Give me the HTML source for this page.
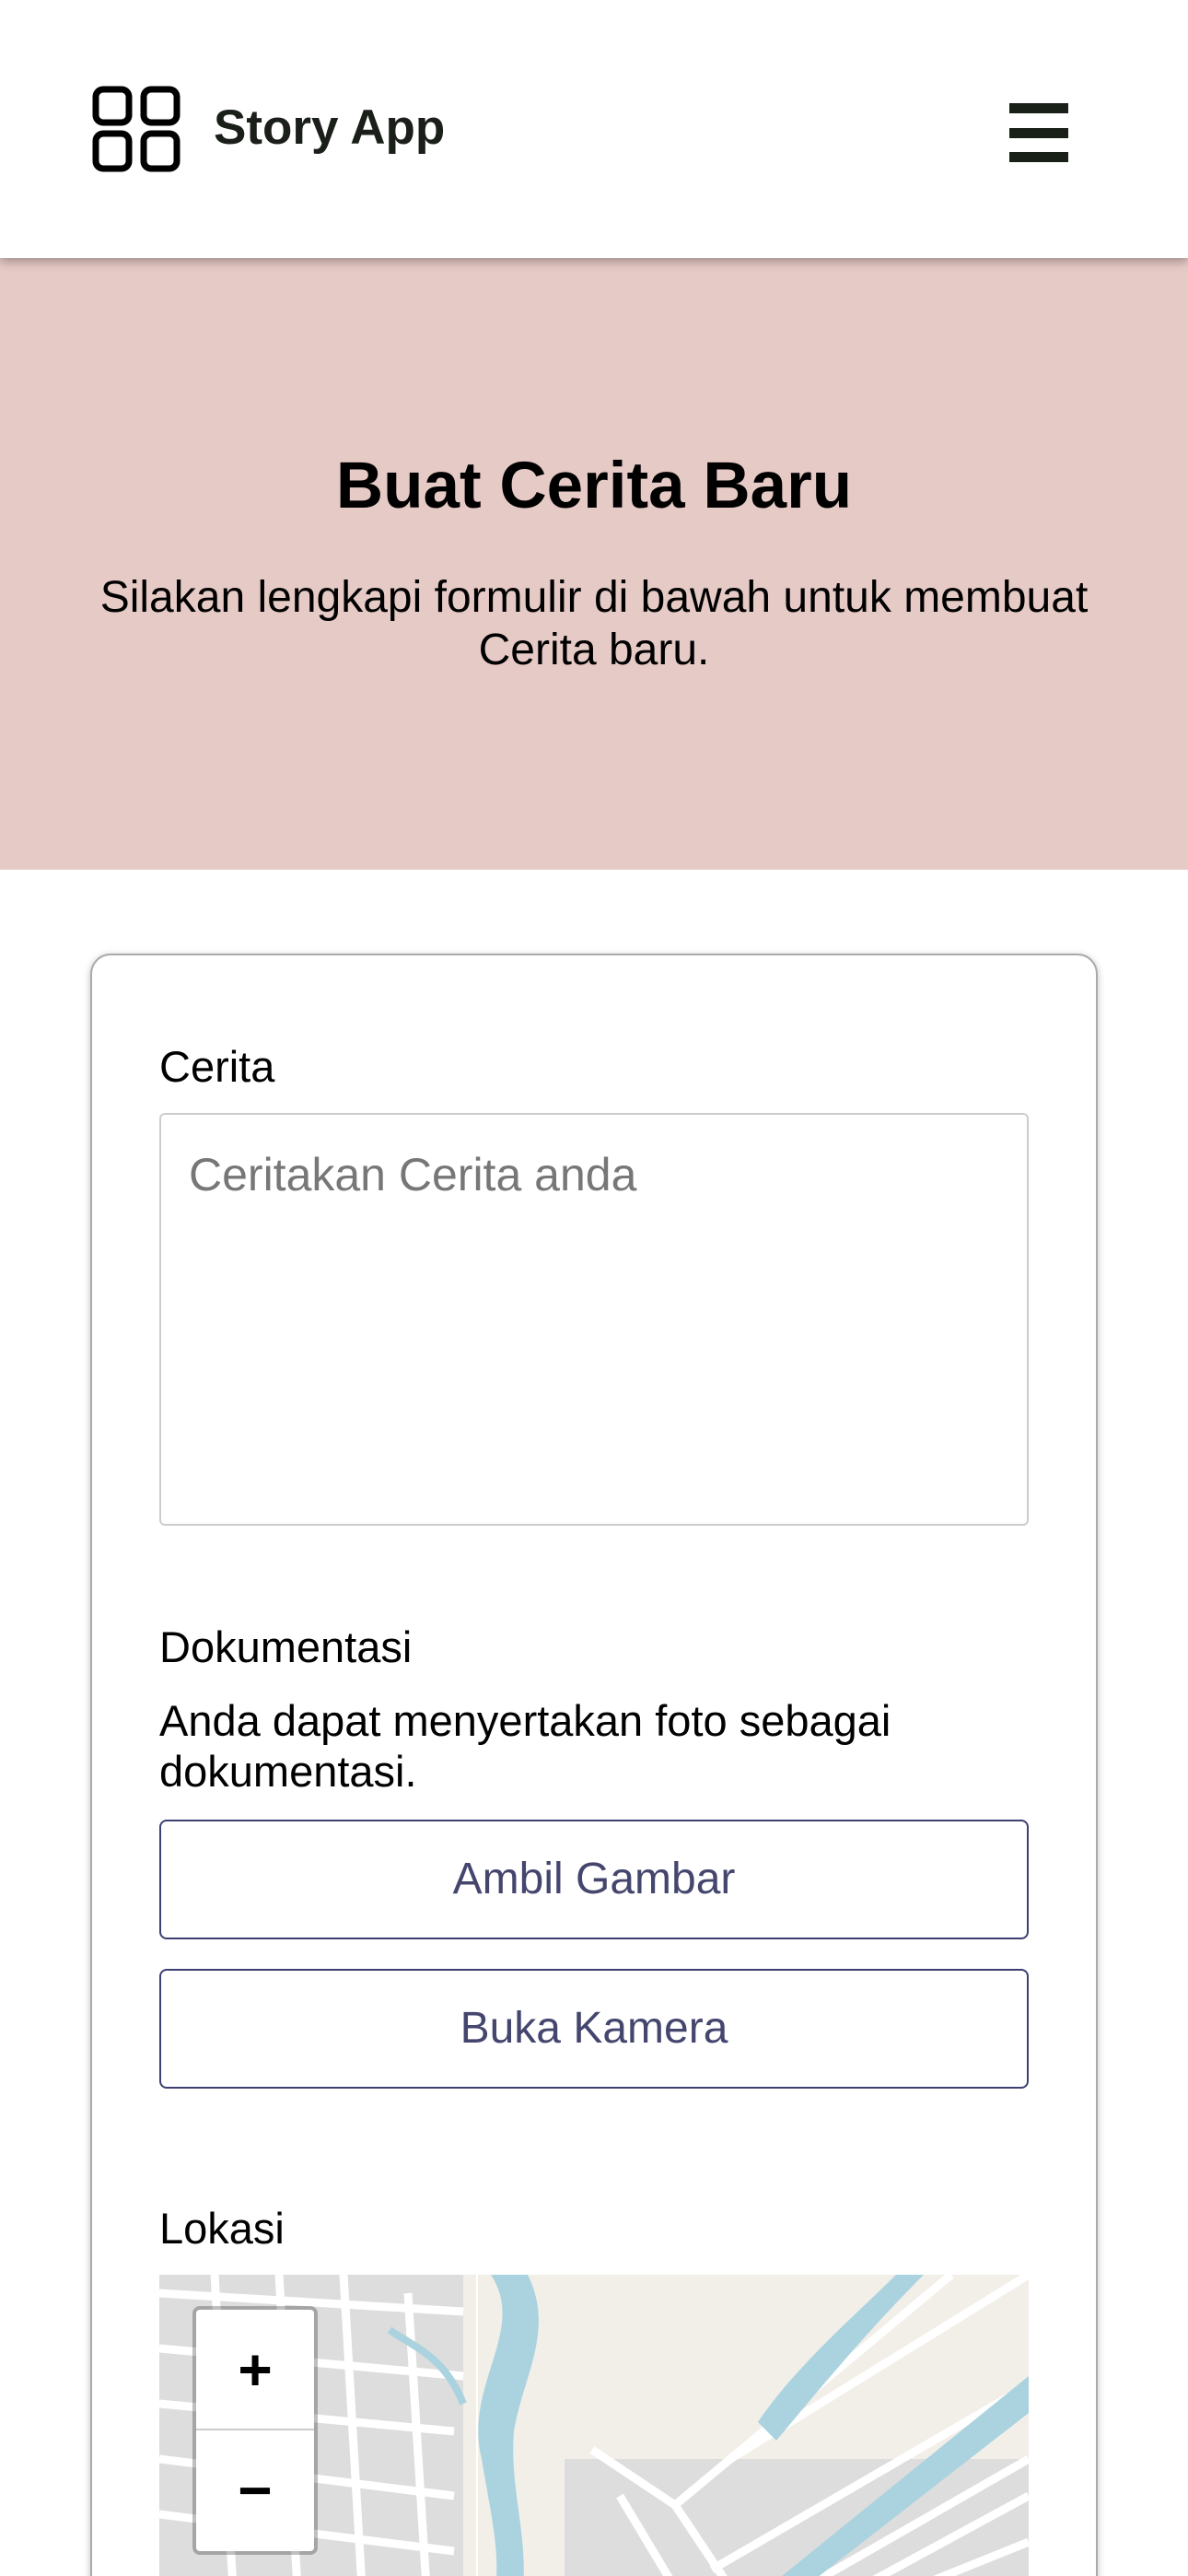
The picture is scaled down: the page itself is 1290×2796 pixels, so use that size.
<!DOCTYPE html>
<html style="height:2796px;overflow:hidden"><head><meta charset="utf-8"><style>
*{box-sizing:border-box;margin:0;padding:0}
body{width:1290px;height:2796px;overflow:hidden;background:#fff;font-family:"Liberation Sans",Arial,sans-serif;color:#000;position:relative}
.hdr{position:absolute;left:0;top:0;width:1290px;height:280px;background:#fff;box-shadow:0 4px 10px rgba(0,0,0,.3);z-index:2}
.hero{position:absolute;left:0;top:280px;width:1290px;height:664px;background:#e6cac6;text-align:center}
.hero h1{position:absolute;top:212px;width:100%;font-size:71px;font-weight:bold;line-height:1}
.hero p{position:absolute;top:340px;left:60px;right:60px;font-size:48px;line-height:57px}
.card{position:absolute;left:98px;top:1035px;width:1094px;height:1800px;border:2px solid #aaa;border-bottom:none;border-radius:22px 22px 0 0;box-shadow:0 2px 8px rgba(0,0,0,.25);background:#fff}
.lbl{position:absolute;left:173px;font-size:47px;line-height:1}
.ta{position:absolute;left:173px;top:1208px;width:944px;height:448px;border:2px solid #ccc;border-radius:6px}
.ta span{position:absolute;left:30px;top:40px;font-size:50px;color:#777;line-height:1}
.btn{position:absolute;left:173px;width:944px;height:130px;border:2px solid #3d4070;border-radius:8px;color:#44466e;font-size:48px;text-align:center;line-height:126px}
.map{position:absolute;left:173px;top:2469px;width:944px;height:327px;background:#f2efe9;overflow:hidden}
.zc{position:absolute;left:36px;top:34px;width:136px;height:270px;background:#fff;border:4px solid rgba(0,0,0,.25);border-radius:8px;background-clip:padding-box}
.zc div{height:131px;text-align:center;font-size:64px;line-height:131px;font-weight:bold}
</style></head><body>
<div class="hdr">
<svg style="position:absolute;left:100px;top:93px" width="98" height="94" viewBox="0 0 98 94"><g fill="none" stroke="#000" stroke-width="7"><rect x="4" y="4" width="36" height="36" rx="8"/><rect x="56" y="4" width="36" height="36" rx="8"/><rect x="4" y="52" width="36" height="38" rx="8"/><rect x="56" y="52" width="36" height="38" rx="8"/></g></svg>
<div style="position:absolute;left:232px;top:108px;font-size:53px;font-weight:bold;color:#1a1f1a">Story App</div>
<div style="position:absolute;left:1096px;top:112px;width:64px;height:11px;background:#182018"></div>
<div style="position:absolute;left:1096px;top:139px;width:64px;height:11px;background:#182018"></div>
<div style="position:absolute;left:1096px;top:165px;width:64px;height:11px;background:#182018"></div>
</div>
<div class="hero"><h1>Buat Cerita Baru</h1><p>Silakan lengkapi formulir di bawah untuk membuat Cerita baru.</p></div>
<div class="card"></div>
<div class="lbl" style="top:1134px">Cerita</div>
<div class="ta"><span>Ceritakan Cerita anda</span></div>
<div class="lbl" style="top:1764px">Dokumentasi</div>
<div class="lbl" style="top:1840px;line-height:55px;width:944px">Anda dapat menyertakan foto sebagai dokumentasi.</div>
<div class="btn" style="top:1975px">Ambil Gambar</div>
<div class="btn" style="top:2137px">Buka Kamera</div>
<div class="lbl" style="top:2395px">Lokasi</div>
<div class="map">
<svg width="944" height="327" viewBox="0 0 944 327" style="position:absolute;left:0;top:0">
<rect width="944" height="327" fill="#f2efe9"/>
<g fill="#ddd"><rect x="0" y="0" width="330" height="327"/><rect x="440" y="200" width="504" height="140"/></g>
<g stroke="#fff" stroke-width="9" fill="none">
<path d="M0 20 L330 40 M0 80 L330 110 M0 140 L320 170 M0 200 L320 240 M0 260 L320 300 M60 0 L80 340 M130 0 L150 340 M200 0 L220 340 M270 20 L290 340"/>
<path d="M470 190 L560 250 L620 340 M560 250 L860 0 M620 200 L944 0 M500 240 L560 340 M600 320 L944 120"/>
<path d="M700 340 L944 200 M760 340 L944 240 M820 340 L944 290"/>
</g>
<path d="M360 0 C400 60 330 120 350 200 C360 260 370 300 365 340 L395 340 C400 280 380 230 385 170 C395 110 430 60 400 0Z" fill="#aad3df"/>
<path d="M650 160 C690 100 760 40 800 0 L830 0 C770 60 720 120 670 180Z" fill="#aad3df"/>
<path d="M660 340 L944 110 L944 150 L700 340Z" fill="#aad3df"/>
<path d="M250 60 C280 80 310 90 330 140" stroke="#aad3df" stroke-width="8" fill="none"/>
<line x1="345" y1="0" x2="345" y2="340" stroke="#fff" stroke-width="2"/>
</svg>
<div class="zc"><div style="border-bottom:2px solid #ccc">+</div><div>−</div></div>
</div>
</body></html>
